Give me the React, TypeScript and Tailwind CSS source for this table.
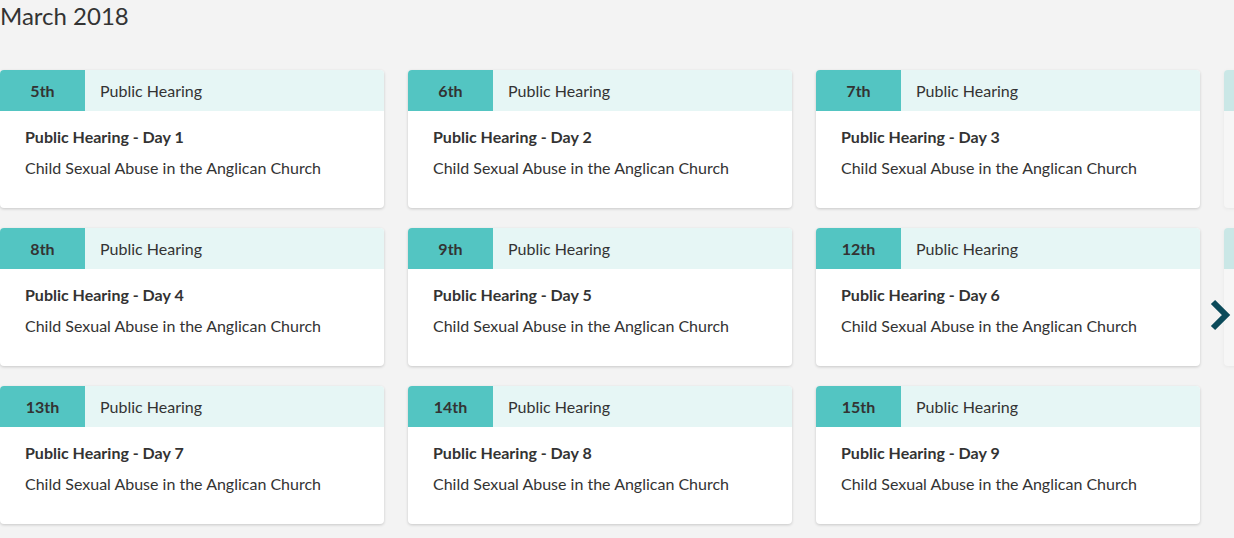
import React from "react";

const items = [
  { d: "5th", n: 1 }, { d: "6th", n: 2 }, { d: "7th", n: 3 }, { d: "", n: 0 },
  { d: "8th", n: 4 }, { d: "9th", n: 5 }, { d: "12th", n: 6 }, { d: "", n: 0 },
  { d: "13th", n: 7 }, { d: "14th", n: 8 }, { d: "15th", n: 9 },
];

function Card({ d, n, faded }: { d: string; n: number; faded?: boolean }) {
  return (
    <div className={`bg-white rounded-[4px] shadow-[0_1px_3px_rgba(0,0,0,0.18)] overflow-hidden h-[138px] ${faded ? "opacity-25" : ""}`}>
      <div className="flex h-[41px] text-[16px] text-[#333] pt-[1px]">
        <div className="w-[85px] -mt-[1px] bg-[#53c5c2] flex items-center justify-center font-bold pt-[1px]">{d}</div>
        <div className="flex-1 -mt-[1px] bg-[#e6f6f5] flex items-center pl-[15px] pt-[1px]">{faded ? "" : "Public Hearing"}</div>
      </div>
      {!faded && (
        <div className="pl-[25px] pt-[16px] text-[16px] leading-[20px] text-[#333]">
          <div className="font-bold">Public Hearing - Day {n}</div>
          <div className="mt-[11px]">Child Sexual Abuse in the Anglican Church</div>
        </div>
      )}
    </div>
  );
}

export default function App() {
  return (
    <div className="relative w-[1234px] h-[538px] overflow-hidden bg-[#f3f3f3] font-['Lato',sans-serif]">
      <h1 className="text-[24px] leading-[32px] text-[#333] m-0 font-normal">March 2018</h1>
      <div className="grid grid-cols-[384px_384px_384px_384px] gap-x-[24px] gap-y-[20px] mt-[38px]">
        {items.map((it, i) => (
          <Card key={i} d={it.d} n={it.n} faded={it.n === 0} />
        ))}
      </div>
      <svg className="absolute left-[1206px] top-[298px]" width="26" height="36" viewBox="0 0 26 36">
        <polyline points="7,4 20,17 7,30" fill="none" stroke="#0b4a5a" strokeWidth="6" strokeLinejoin="miter" />
      </svg>
    </div>
  );
}
